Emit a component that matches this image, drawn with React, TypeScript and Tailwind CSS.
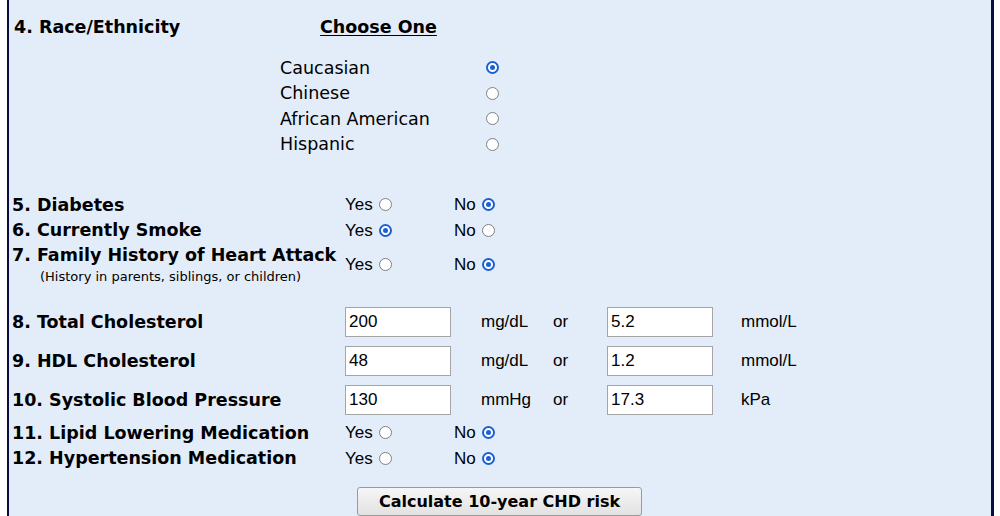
import React from 'react';

const verdana = { fontFamily: '"DejaVu Sans", Verdana, sans-serif' };
const arial = { fontFamily: '"Liberation Sans", Arial, sans-serif' };

function Radio({ checked }: { checked?: boolean }) {
  return checked ? (
    <span className="inline-flex w-[13px] h-[13px] rounded-full border-2 border-[#1b5fd1] bg-white items-center justify-center">
      <span className="w-[5px] h-[5px] rounded-full bg-[#1b5fd1]" />
    </span>
  ) : (
    <span className="inline-block w-[13px] h-[13px] rounded-full border-[1.5px] border-[#808080] bg-white" />
  );
}

function YesNo({ yes }: { yes: boolean }) {
  return (
    <div className="flex items-center text-[17px] text-black" style={arial}>
      <span className="w-[109px] flex items-center gap-[6px]">
        Yes <Radio checked={yes} />
      </span>
      <span className="flex items-center gap-[6px]">
        No <Radio checked={!yes} />
      </span>
    </div>
  );
}

function BinaryRow({ label, yes }: { label: string; yes: boolean }) {
  return (
    <div className="flex items-center h-[25.5px]">
      <div className="w-[333px] font-bold text-[17.5px] text-black whitespace-nowrap" style={verdana}>
        {label}
      </div>
      <YesNo yes={yes} />
    </div>
  );
}

function ValueRow({ label, a, unitA, b, unitB }: { label: string; a: string; unitA: string; b: string; unitB: string }) {
  return (
    <div className="flex items-center h-[30px]">
      <div className="w-[333px] font-bold text-[17.5px] text-black whitespace-nowrap" style={verdana}>
        {label}
      </div>
      <div className="flex items-center text-[17px] text-black" style={arial}>
        <input
          readOnly
          value={a}
          className="w-[106px] h-[30px] border border-[#a5a5a5] bg-white px-[3px] text-[17px] outline-none"
          style={arial}
        />
        <span className="w-[72px] pl-[30px] box-content">{unitA}</span>
        <span className="w-[54px]">or</span>
        <input
          readOnly
          value={b}
          className="w-[106px] h-[30px] border border-[#a5a5a5] bg-white px-[3px] text-[17px] outline-none"
          style={arial}
        />
        <span className="pl-[28px]">{unitB}</span>
      </div>
    </div>
  );
}

const races = [
  { name: 'Caucasian', checked: true },
  { name: 'Chinese', checked: false },
  { name: 'African American', checked: false },
  { name: 'Hispanic', checked: false },
];

export default function App() {
  return (
    <div className="w-[1000px] h-[516px] bg-white pl-[7px] pr-[6px] overflow-hidden">
      <div className="h-full border-l-2 border-r-[3px] border-[#0b0b45] bg-[#e3edfa] pl-[3px] pt-[16px]">
        <div className="flex items-center h-[22px] pl-[2px]" style={verdana}>
          <div className="w-[306px] font-bold text-[17.5px] text-black">4. Race/Ethnicity</div>
          <div className="font-bold text-[17.5px] text-black underline underline-offset-2">Choose One</div>
        </div>

        <div className="mt-[17px] pl-[268px]">
          {races.map((r) => (
            <div key={r.name} className="flex items-center h-[25.5px]">
              <span className="w-[206px] text-[17.5px] text-black" style={verdana}>
                {r.name}
              </span>
              <Radio checked={r.checked} />
            </div>
          ))}
        </div>

        <div className="mt-[35px]">
          <BinaryRow label="5. Diabetes" yes={false} />
          <BinaryRow label="6. Currently Smoke" yes={true} />
          <div className="flex items-center">
            <div className="w-[333px]" style={verdana}>
              <div className="font-bold text-[17.5px] text-black leading-[25px] whitespace-nowrap">
                7. Family History of Heart Attack
              </div>
              <div className="text-[13px] text-black pl-[28px] leading-[18px] whitespace-nowrap">
                (History in parents, siblings, or children)
              </div>
            </div>
            <YesNo yes={false} />
          </div>
        </div>

        <div className="mt-[21px] flex flex-col gap-[9px]">
          <ValueRow label="8. Total Cholesterol" a="200" unitA="mg/dL" b="5.2" unitB="mmol/L" />
          <ValueRow label="9. HDL Cholesterol" a="48" unitA="mg/dL" b="1.2" unitB="mmol/L" />
          <ValueRow label="10. Systolic Blood Pressure" a="130" unitA="mmHg" b="17.3" unitB="kPa" />
        </div>

        <div className="mt-[5px]">
          <BinaryRow label="11. Lipid Lowering Medication" yes={false} />
          <BinaryRow label="12. Hypertension Medication" yes={false} />
        </div>

        <div className="mt-[16px] pl-[345px]">
          <button
            type="button"
            className="w-[285px] h-[29px] rounded-[3px] border border-[#9a9a9a] bg-gradient-to-b from-[#f6f6f6] to-[#e2e2e2] font-bold text-[16px] text-black"
            style={verdana}
          >
            Calculate 10-year CHD risk
          </button>
        </div>
      </div>
    </div>
  );
}
